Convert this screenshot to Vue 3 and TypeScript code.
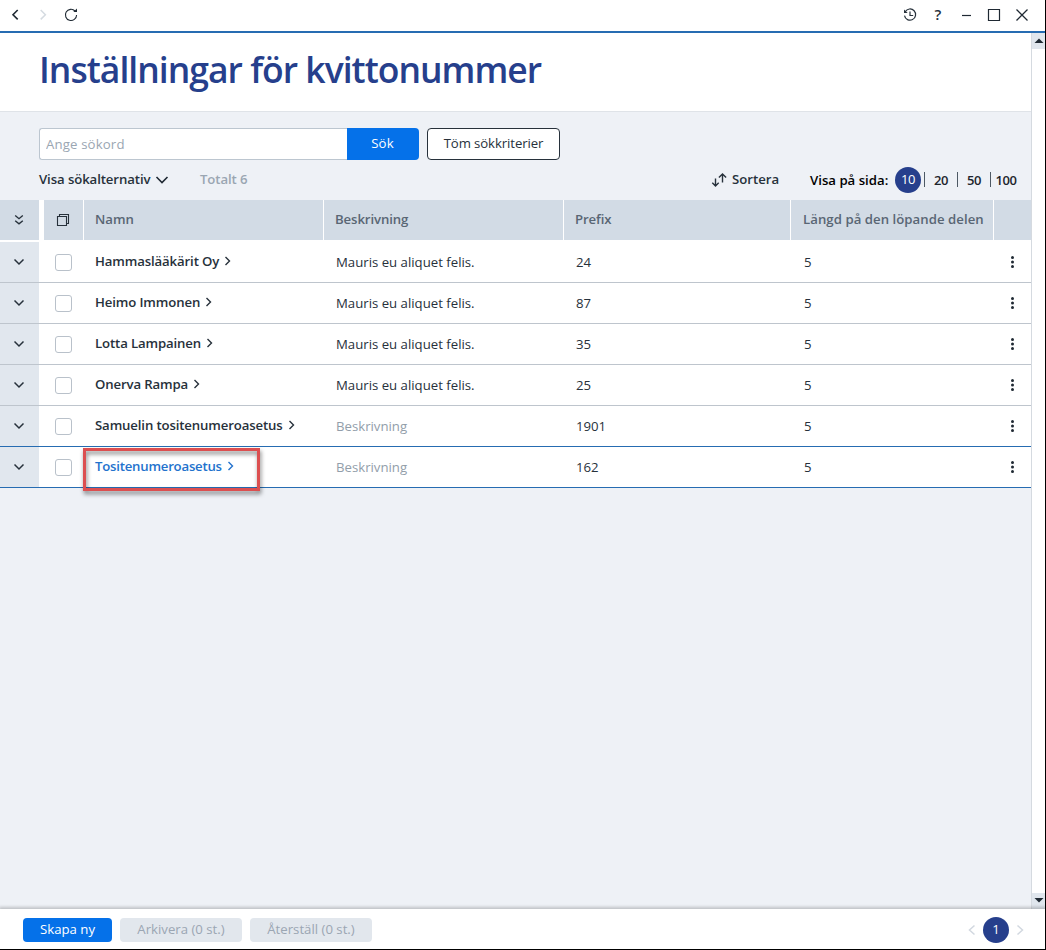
<script setup lang="ts">
import { ref } from 'vue'

interface Row {
  name: string
  description: string
  prefix: string
  length: number
}

const rows: Row[] = [
  { name: 'Hammaslääkärit Oy', description: 'Mauris eu aliquet felis.', prefix: '24', length: 5 },
  { name: 'Heimo Immonen', description: 'Mauris eu aliquet felis.', prefix: '87', length: 5 },
  { name: 'Lotta Lampainen', description: 'Mauris eu aliquet felis.', prefix: '35', length: 5 },
  { name: 'Onerva Rampa', description: 'Mauris eu aliquet felis.', prefix: '25', length: 5 },
  { name: 'Samuelin tositenumeroasetus', description: '', prefix: '1901', length: 5 },
  { name: 'Tositenumeroasetus', description: '', prefix: '162', length: 5 },
]
const sizes = [10, 20, 50, 100]
const pageSize = ref(10)
const active = ref(5)
const query = ref('')
</script>

<template>
  <div class="window">
    <header class="titlebar">
      <svg class="i-back" width="16" height="16" viewBox="0 0 16 16"><path d="M10.7 3 6 7.700l4.700 4.700" stroke="#1f2933" stroke-width="1.6" /></svg>
      <svg class="i-fwd" width="16" height="16" viewBox="0 0 16 16"><path d="M5.700 3 10.400 7.700l-4.700 4.700" stroke="#d5dbe1" stroke-width="1.5" /></svg>
      <svg class="i-reload" width="16" height="16" viewBox="0 0 16 16"><path d="M12 4A5.600 5.600 0 1 0 13.600 8" stroke="#1f2933" stroke-width="1.100" /><path d="M10.300 4.900h3.700V1.500z" fill="#1f2933" /></svg>
      <span class="spacer"></span>
      <svg class="i-hist" width="16" height="16" viewBox="0 0 16 16"><path d="M3.200 4.700A5.600 5.600 0 1 1 2.500 8.600M8 4.500v4h3.200" stroke="#27313b" stroke-width="1.2" /><path d="M2 2.500v3.600h3.700z" fill="#27313b" /></svg>
      <span class="help">?</span>
      <svg class="i-min" width="16" height="16" viewBox="0 0 16 16"><path d="M4 8.500h9" stroke="#1f2933" stroke-width="1.2" /></svg>
      <svg class="i-max" width="16" height="16" viewBox="0 0 16 16"><path d="M2.500 2.500h11v11h-11z" stroke="#1f2933" stroke-width="1.2" /></svg>
      <svg class="i-close" width="16" height="16" viewBox="0 0 16 16"><path d="m2.500 2.500 11 11m0-11-11 11" stroke="#1f2933" stroke-width="1.3" /></svg>
    </header>

    <div class="middle">
      <main class="content">
        <div class="heading"><h1>Inställningar för kvittonummer</h1></div>
        <div class="search">
          <input v-model="query" class="field" type="text" placeholder="Ange sökord" />
          <button class="find">Sök</button>
          <button class="clear">Töm sökkriterier</button>
        </div>
        <div class="options">
          <span class="alt">Visa sökalternativ</span>
          <svg class="i-alt" width="14" height="10" viewBox="0 0 14 10"><path d="m1.500 2 5.500 5.500L12.500 2" stroke="#1f2933" stroke-width="1.6" /></svg>
          <span class="total">Totalt 6</span>
          <span class="spacer"></span>
          <svg class="i-sort" width="16" height="16" viewBox="0 0 16 16"><path d="M4.500 6.500v7M1.300 10.700l3.200 3.200 3.200-3.200M11.500 10.500V2.300M7.900 5.500l3.600-3.600 3.600 3.600" stroke="#27313b" stroke-width="1.400" /></svg>
          <span class="sort">Sortera</span>
          <span class="show">Visa på sida:</span>
          <div class="sizes">
            <button v-for="s in sizes" :key="s" class="size" :class="{ on: s === pageSize }" @click="pageSize = s"><span>{{ s }}</span></button>
          </div>
        </div>

        <div class="row head">
          <div class="c-exp">
            <svg width="12" height="14" viewBox="0 0 12 14"><path d="m2.200 2.500 3.800 3.200 3.800-3.200m-7.600 5.200 3.800 3.200 3.800-3.200" stroke="#27313b" stroke-width="1.4" /></svg>
          </div>
          <div class="c-check">
            <svg width="14" height="14" viewBox="0 0 14 14"><path d="M1.500 3.500h9v9h-9zM3.500 3.500v-2h9v9h-2" stroke="#27313b" stroke-width="1.1" /></svg>
          </div>
          <div class="c-name">Namn</div>
          <div class="c-desc">Beskrivning</div>
          <div class="c-pre">Prefix</div>
          <div class="c-len">Längd på den löpande delen</div>
          <div class="c-menu"></div>
        </div>
        <div class="body">
          <div v-for="(r, i) in rows" :key="r.name" class="row" :class="{ active: i === active, above: i === active - 1 }">
            <div class="c-exp">
              <svg width="12" height="8" viewBox="0 0 12 8"><path d="m1.500 1.500 4.500 4.500 4.500-4.500" stroke="#27313b" stroke-width="1.5" /></svg>
            </div>
            <div class="c-check"><i class="box"></i></div>
            <div class="c-name">
              <a>{{ r.name }}</a>
              <svg width="7" height="10" viewBox="0 0 7 10"><path d="m1.500 1 4 4-4 4" stroke="currentColor" stroke-width="1.400" /></svg>
              <i v-if="i === active" class="marker"></i>
            </div>
            <div class="c-desc" :class="{ empty: !r.description }">{{ r.description || 'Beskrivning' }}</div>
            <div class="c-pre">{{ r.prefix }}</div>
            <div class="c-len">{{ r.length }}</div>
            <div class="c-menu">
              <svg width="4" height="14" viewBox="0 0 4 14"><g fill="#1f2933"><circle cx="1.500" cy="2.500" r="1.500" /><circle cx="1.500" cy="7" r="1.500" /><circle cx="1.500" cy="11.500" r="1.500" /></g></svg>
            </div>
          </div>
        </div>
      </main>
      <aside class="scroll">
        <span class="arrow"><svg width="10" height="6" viewBox="0 0 10 6"><path d="M0.500 5 5 0.500l4.500 4.500z" fill="#1f2933" /></svg></span>
        <span class="arrow"><svg width="10" height="6" viewBox="0 0 10 6"><path d="M0.500 0 5 4.500 9.500 0z" fill="#1f2933" /></svg></span>
      </aside>
    </div>

    <footer class="footer">
      <button class="create">Skapa ny</button>
      <button class="off">Arkivera (0 st.)</button>
      <button class="off restore">Återställ (0 st.)</button>
      <span class="spacer"></span>
      <svg width="8" height="12" viewBox="0 0 8 12"><path d="m6.500 1.500-5 4.500 5 4.500" stroke="#d2d8e0" stroke-width="1.500" /></svg>
      <span class="page">1</span>
      <svg width="8" height="12" viewBox="0 0 8 12"><path d="m1.500 1.500 5 4.500-5 4.500" stroke="#d2d8e0" stroke-width="1.500" /></svg>
    </footer>
  </div>
</template>

<style>
body { margin: 0; overflow: hidden; }
</style>

<style scoped>
* { box-sizing: border-box; }
.window {
  width: 1046px; height: 950px; display: flex; flex-direction: column;
  border-right: 1px solid #000; border-bottom: 1px solid #000;
  background: #fff; color: #27313b;
  font: 13.2px/20px "Open Sans", "Noto Sans", sans-serif;
}
svg { display: block; flex: none; fill: none; }
button { font: inherit; border: 0; padding: 0; margin: 0; background: none; white-space: nowrap; }
.spacer { flex: 1; }
.titlebar { height: 33px; flex: none; display: flex; align-items: center; border-bottom: 2px solid #266cb2; padding: 0 15px 1px 7px; }
.i-fwd { margin-left: 12px; }
.i-reload { margin-left: 12px; }
.help { width: 16px; margin: 0 12px; padding-bottom: 2px; text-align: center; font-size: 15px; font-weight: 600; }
.i-max, .i-close { margin-left: 12px; }
.middle { flex: 1; display: flex; min-height: 0; }
.content { width: 1031px; background: #eef1f6; }
.heading { height: 79px; background: #fff; border-bottom: 1px solid #dfe3e8; padding: 12px 0 0 39px; }
h1 { margin: 0; font-size: 35.5px; line-height: 48px; font-weight: 600; color: #263f8c; white-space: nowrap; letter-spacing: -0.98px; }
.search { display: flex; padding: 16px 0 0 39px; height: 48px; }
.field { width: 308px; height: 32px; border: 1px solid #bcc6d0; border-right: 0; border-radius: 3px 0 0 3px; padding: 0 6px; font: inherit; letter-spacing: 0.15px; background: #fff; outline: 0; }
.field::placeholder { color: #9aa6b2; opacity: 1; }
.find { width: 72px; height: 32px; padding: 0 1px 2px 0; background: #0571e9; color: #fff; border-radius: 0 4px 4px 0; letter-spacing: 0.2px; }
.clear { width: 133px; height: 32px; padding-bottom: 2px; margin-left: 8px; border: 1px solid #27313b; border-radius: 4px; background: #fff; color: #27313b; letter-spacing: -0.1px; }
.options { height: 40px; display: flex; align-items: center; padding: 0 0 1px 39px; font-weight: 600; white-space: nowrap; }
.alt { width: 111px; letter-spacing: -0.1px; padding-bottom: 1px; }
.i-alt { margin: 1px 0 0 5px; }
.total { margin-left: 31px; padding-bottom: 1px; color: #9aa6b2; letter-spacing: -0.1px; }
.sort { width: 46px; margin-left: 5px; padding-bottom: 1px; }
.show { width: 78px; margin-left: 32px; color: #000; }
.sizes { display: flex; align-items: center; margin-left: 7px; }
.size { width: 33px; height: 15px; border-left: 1px solid #4d5964; font-size: 13px; font-weight: 600; color: #1d252d; line-height: 16px; display: flex; align-items: center; justify-content: center; letter-spacing: -0.4px; }
.size.on { width: 29px; border: 0; justify-content: flex-start; }
.size.on span { width: 26px; height: 26px; flex: none; border-radius: 50%; background: #263f8c; color: #fff; line-height: 25px; text-align: center; font-weight: 400; }
.size:last-child { width: 41px; padding-right: 10px; }
.row { display: grid; grid-template-columns: 39px 45px 240px 240px 227px 203px 37px; height: 41px; border-bottom: 1px solid #bec5cd; background: #fff; white-space: nowrap; }
.row > div { display: flex; align-items: center; }
.row .c-exp { justify-content: center; padding-right: 1px; background: #e1e7ee; }
.row .c-check { padding-left: 16px; }
.c-name { position: relative; padding-left: 11px; gap: 5px; font-weight: 600; letter-spacing: -0.13px; }
.row:not(.head) .c-name { padding-bottom: 2px; }
.c-desc, .c-pre { padding-left: 12px; }
.c-len { padding-left: 13px; }
.row .c-menu { padding-left: 17px; }
.empty { color: #929eaa; }
.head { height: 40px; border: 0; background: #d2dbe5; color: #596674; font-weight: 600; }
.head > div { border-right: 1px solid #fff; padding-bottom: 2px; }
.head .c-name { letter-spacing: 0; }
.head .c-desc, .head .c-pre { padding-left: 11px; letter-spacing: -0.1px; }
.head .c-len { padding-left: 12px; letter-spacing: 0.04px; }
.row.head .c-exp { background: #d2dbe5; border: 0; padding: 0 1px 0 0; }
.head .c-check { border-left: 5px solid #fff; }
.row.head .c-check { padding: 0 0 0 12px; }
.head > .c-menu { border-right: 0; }
.body { border-top: 2px solid #fff; }
.active, .above { border-bottom-color: #266cb2; }
.active .c-name { color: #2372cd; letter-spacing: -0.22px; }
.box { width: 17px; height: 17px; border: 1px solid #b9c1ca; border-radius: 3px; background: #fff; }
.marker { position: absolute; z-index: 1; left: -1px; top: 1px; width: 177px; height: 43px; border: 3px solid #dc4f50; filter: drop-shadow(1px 3px 2px rgba(0, 0, 0, 0.5)); }
.scroll { width: 14px; border-left: 1px solid #d5dae0; display: flex; flex-direction: column; justify-content: space-between; background: #fff; }
.arrow { height: 16px; background: #e0e6ed; display: flex; align-items: center; justify-content: center; }
.footer { position: relative; height: 40px; flex: none; display: flex; align-items: center; padding: 2px 21px 0 23px; background: #fff; box-shadow: 0 -1px 3px 1px rgba(0, 0, 0, 0.2); }
.footer button { height: 24px; border-radius: 4px; line-height: 21px; padding-bottom: 2px; }
.create { width: 89px; background: #0571e9; color: #fff; }
.off { width: 122px; margin-left: 8px; background: #e2e7ed; color: #9ba6b3; }
.page { width: 26px; height: 26px; margin: 0 7px; border-radius: 50%; background: #263f8c; color: #fff; line-height: 25px; text-align: center; }
</style>
